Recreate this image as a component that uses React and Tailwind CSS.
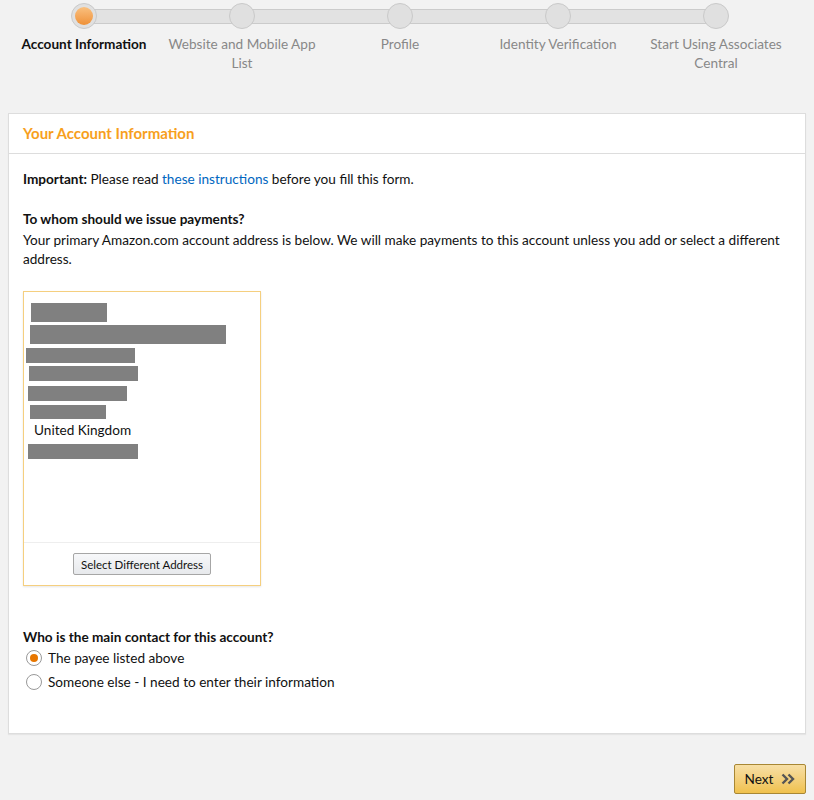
import React from "react";

const steps = [
  { label: "Account Information", active: true },
  { label: "Website and Mobile App List" },
  { label: "Profile" },
  { label: "Identity Verification" },
  { label: "Start Using Associates Central" },
];

const bars = [
  "ml-[7px] w-[76px] h-[19px] mt-[11px]",
  "ml-[6px] w-[196px] h-[19px] mt-[3px]",
  "ml-[2px] w-[109px] h-[15px] mt-[4px]",
  "ml-[5px] w-[109px] h-[15px] mt-[3px]",
  "ml-[4px] w-[99px] h-[15px] mt-[5px]",
  "ml-[6px] w-[76px] h-[14px] mt-[4px]",
];

const Stepper = () => (
  <div className="relative pt-[3px]">
    <div className="absolute left-[84px] w-[632px] top-[9px] h-[15px] bg-[#e2e2e2] border border-[#cbcbcb]" />
    <div className="relative grid grid-cols-5 w-[790px] ml-[5px]">
      {steps.map((s) => (
        <div key={s.label} className="flex flex-col items-center">
          <div className="w-[26px] h-[26px] rounded-full bg-[#e0e0e0] border border-[#c9c9c9] flex items-center justify-center">
            {s.active && (
              <div className="w-[18px] h-[18px] rounded-full bg-gradient-to-b from-[#f9c07e] to-[#ef9135]" />
            )}
          </div>
          <div
            className={
              "mt-[6px] text-center text-[13.6px] leading-[19px] px-1 " +
              (s.active ? "font-bold text-[#111]" : "text-[#888]")
            }
          >
            {s.label}
          </div>
        </div>
      ))}
    </div>
  </div>
);

const Radio = ({ checked, label }) => (
  <label className="flex items-center h-[24px]">
    <span className="ml-[3px] w-[16px] h-[16px] rounded-full border border-[#999] bg-white flex items-center justify-center">
      {checked && <span className="w-[8px] h-[8px] rounded-full bg-[#e77600]" />}
    </span>
    <span className="ml-[6px]">{label}</span>
  </label>
);

export default function App() {
  return (
    <div className="min-h-[800px] bg-[#f2f2f2] font-['Lato',sans-serif] text-[13.6px] leading-[19px] text-[#111]">
      <Stepper />

      <div className="mx-[8px] mt-[40px] bg-white border border-[#dddddd] shadow-[0_1px_1px_rgba(0,0,0,0.05)]">
        <div className="h-[40px] px-[14px] flex items-center border-b border-[#dddddd]">
          <span className="text-[15px] font-bold text-[#f7a01d]">Your Account Information</span>
        </div>

        <div className="px-[14px] pt-[16px] pb-[39px]">
          <p>
            <span className="font-bold">Important:</span> Please read{" "}
            <span className="text-[#0066c0]">these instructions</span> before you fill this form.
          </p>

          <p className="mt-[21px] font-bold">To whom should we issue payments?</p>
          <p className="mt-[2px]">
            Your primary Amazon.com account address is below. We will make payments to this account unless you add or
            select a different address.
          </p>

          <div className="mt-[22px] w-[238px] h-[295px] border border-[#f5cf7f] shadow-[0_1px_2px_rgba(0,0,0,0.1)] flex flex-col">
            <div className="flex-1 flex flex-col items-start">
              {bars.map((b, i) => (
                <div key={i} className={"bg-[#808080] " + b} />
              ))}
              <div className="ml-[10px] mt-[2px] h-[19px]">United Kingdom</div>
              <div className="ml-[4px] mt-[4px] w-[110px] h-[15px] bg-[#808080]" />
            </div>
            <div className="h-[43px] border-t border-[#eeeeee] flex items-center justify-center">
              <button className="h-[22px] px-[7px] text-[11.5px] text-[#111] border border-[#a6a6a6] rounded-[2px] bg-gradient-to-b from-[#f7f8fa] to-[#e7e9ec]">
                Select Different Address
              </button>
            </div>
          </div>

          <p className="mt-[42px] font-bold">Who is the main contact for this account?</p>
          <div className="-mt-[1px]">
            <Radio checked label="The payee listed above" />
            <Radio label="Someone else - I need to enter their information" />
          </div>
        </div>
      </div>

      <div className="flex justify-end px-[8px] mt-[30px]">
        <button className="w-[72px] h-[30px] flex items-center justify-center gap-[8px] rounded-[2px] border border-[#a88734] bg-gradient-to-b from-[#f7dfa5] to-[#f0c14b] text-[#111]">
          <span>Next</span>
          <svg width="14" height="12" viewBox="0 0 14 12" fill="none" stroke="#555" strokeWidth="2.4">
            <path d="M1.5 1.5 L6 6 L1.5 10.5" />
            <path d="M7.5 1.5 L12 6 L7.5 10.5" />
          </svg>
        </button>
      </div>
    </div>
  );
}
